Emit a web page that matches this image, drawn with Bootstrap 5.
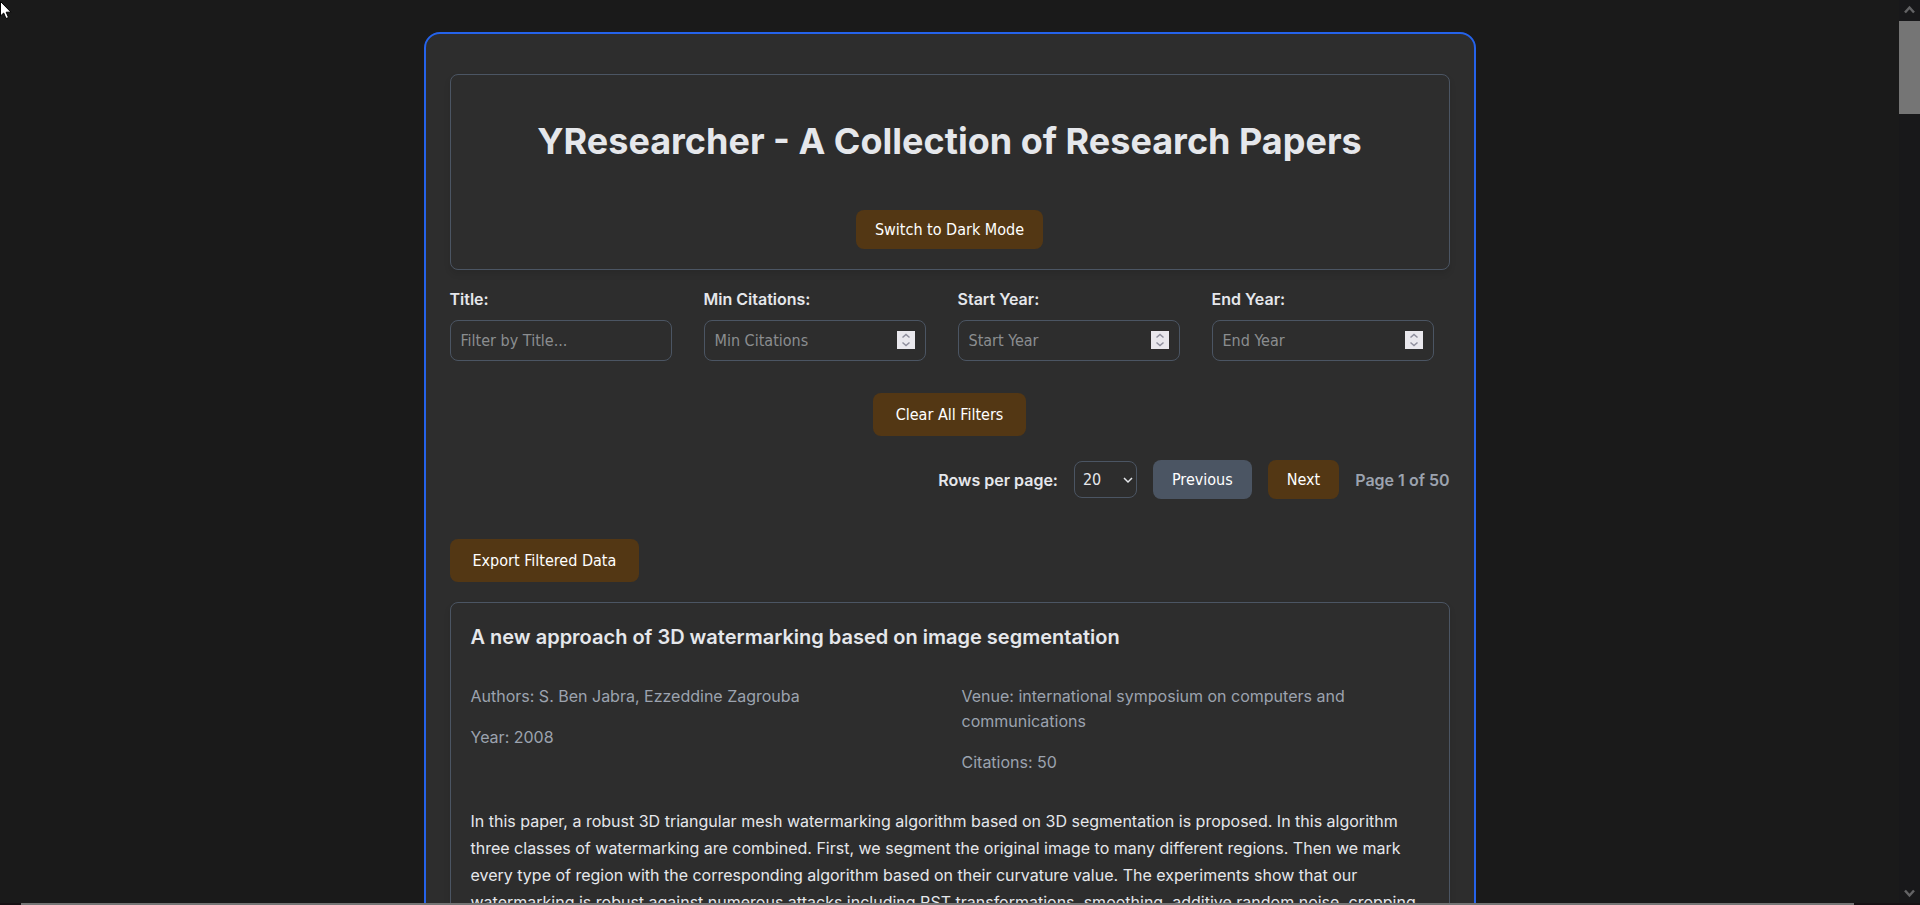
<!DOCTYPE html>
<html lang="en">
<head>
<meta charset="utf-8">
<meta name="viewport" content="width=device-width, initial-scale=1">
<title>YResearcher</title>
<link href="https://cdn.jsdelivr.net/npm/bootstrap@5.3.0/dist/css/bootstrap.min.css" rel="stylesheet">
<style>
  body { background: #1a1a1a; color: #e5e7eb; font-family: Inter, sans-serif; font-size: 16px; }
  .shell { max-width: 1052px; margin-top: 32px; padding: 40px 24px; background: #2d2d2d; border: 2px solid #2563eb; border-radius: 16px; }
  .panel { padding: 20px; border: 1px solid #4b5563; border-radius: 8px; box-shadow: 0 4px 6px rgba(0, 0, 0, .1); }
  .site-title { font-size: 36px; line-height: 44px; font-weight: 700; margin: 24px 0 47px; }
  .ui-btn, .field, .pager-select { font-family: "DejaVu Sans Condensed", "Noto Sans", sans-serif; font-size: 16px; line-height: 19px; border-radius: 8px; }
  .ui-btn { border: 0; padding: 10px 19px; color: #fff; background: #533714; }
  .ui-btn:hover, .ui-btn:active { color: #fff; background: #6b4a1d; }
  .ui-btn.wide { padding: 12px 23px; }
  .ui-btn:disabled { color: #fff; background: #4b5563; opacity: 1; }
  .filter { padding-right: 16px; }
  .filter label { line-height: 26px; font-weight: 600; }
  .field, .field:focus, .pager-select { color: #e5e7eb; background: transparent; border: 1px solid #4b5563; }
  .field { height: 41px; padding: 10px; }
  .field::placeholder { color: #8b8d90; }
  .field[type=number] { appearance: textfield; }
  .field::-webkit-inner-spin-button { appearance: none; }
  .spinner { right: 11px; top: 11px; }
  .pager-select { appearance: none; width: 63px; height: 37px; padding: 0 8px; }
  .chev { right: 4px; }
  .muted { color: #9ca3af; }
  .card-title-text { font-size: 20px; line-height: 28px; font-weight: 600; margin-bottom: 33px; }
  .paper { margin-top: 20px; }
  .meta { gap: 24px; line-height: 25px; margin-bottom: 33px; }
  .abstract { line-height: 27px; }
  .vbar { width: 21px; background: #18181a; }
  .vthumb { height: 93px; background: #757575; }
  .hbar { height: 2px; background: #171114; padding: 0 66px 0 21px; }
  .hthumb { background: #757575; }
</style>
</head>
<body class="vh-100 overflow-hidden d-flex flex-column">
<div class="d-flex flex-fill overflow-hidden">
  <main class="flex-fill overflow-hidden">
    <div class="shell mx-auto">
      <header class="panel text-center mb-3">
        <h1 class="site-title">YResearcher - A Collection of Research Papers</h1>
        <button type="button" class="btn ui-btn">Switch to Dark Mode</button>
      </header>

      <form>
        <div class="row row-cols-2 row-cols-md-4 gx-3 gy-3">
          <div class="col"><div class="filter">
            <label for="f-title" class="mb-2">Title:</label>
            <input id="f-title" type="text" class="form-control field" placeholder="Filter by Title...">
          </div></div>
          <div class="col"><div class="filter">
            <label for="f-cit" class="mb-2">Min Citations:</label>
            <div class="position-relative">
              <input id="f-cit" type="number" class="form-control field" placeholder="Min Citations">
              <svg class="spinner position-absolute" width="18" height="18" aria-hidden="true"><rect width="18" height="18" fill="#e9e8ed"/><path d="M5.500 6.500 9 3.500l3.500 3M5.500 11.500 9 14.500l3.500-3" fill="none" stroke="#8f8f9d" stroke-width="1.500"/></svg>
            </div>
          </div></div>
          <div class="col"><div class="filter">
            <label for="f-start" class="mb-2">Start Year:</label>
            <div class="position-relative">
              <input id="f-start" type="number" class="form-control field" placeholder="Start Year">
              <svg class="spinner position-absolute" width="18" height="18" aria-hidden="true"><rect width="18" height="18" fill="#e9e8ed"/><path d="M5.500 6.500 9 3.500l3.500 3M5.500 11.500 9 14.500l3.500-3" fill="none" stroke="#8f8f9d" stroke-width="1.500"/></svg>
            </div>
          </div></div>
          <div class="col"><div class="filter">
            <label for="f-end" class="mb-2">End Year:</label>
            <div class="position-relative">
              <input id="f-end" type="number" class="form-control field" placeholder="End Year">
              <svg class="spinner position-absolute" width="18" height="18" aria-hidden="true"><rect width="18" height="18" fill="#e9e8ed"/><path d="M5.500 6.500 9 3.500l3.500 3M5.500 11.500 9 14.500l3.500-3" fill="none" stroke="#8f8f9d" stroke-width="1.500"/></svg>
            </div>
          </div></div>
        </div>
        <div class="d-flex justify-content-center pt-2 mt-4 mb-4">
          <button type="reset" class="btn ui-btn wide">Clear All Filters</button>
        </div>
      </form>

      <div class="d-flex flex-wrap justify-content-end align-items-center gap-3 mb-3">
        <label for="rows" class="fw-semibold">Rows per page:</label>
        <div class="position-relative">
          <select id="rows" class="pager-select d-block"><option>20</option><option>50</option><option>100</option></select>
          <svg class="chev pe-none position-absolute top-50 translate-middle-y" width="10" height="8" aria-hidden="true"><path d="M1 2l4 4 4-4" fill="none" stroke="#e5e7eb" stroke-width="1.500"/></svg>
        </div>
        <button type="button" class="btn ui-btn" disabled>Previous</button>
        <button type="button" class="btn ui-btn">Next</button>
        <span class="muted fw-semibold">Page 1 of 50</span>
      </div>

      <div class="pt-4">
        <button type="button" class="btn ui-btn wide">Export Filtered Data</button>
      </div>

      <article class="panel paper">
        <h2 class="card-title-text">A new approach of 3D watermarking based on image segmentation</h2>
        <div class="meta muted d-flex">
          <div class="w-50">
            <p class="mb-3">Authors: S. Ben Jabra, Ezzeddine Zagrouba</p>
            <p class="mb-0">Year: 2008</p>
          </div>
          <div class="w-50">
            <p class="mb-3">Venue: international symposium on computers and communications</p>
            <p class="mb-0">Citations: 50</p>
          </div>
        </div>
        <p class="abstract mb-0">In this paper, a robust 3D triangular mesh watermarking algorithm based on 3D segmentation is proposed. In this algorithm three classes of watermarking are combined. First, we segment the original image to many different regions. Then we mark every type of region with the corresponding algorithm based on their curvature value. The experiments show that our watermarking is robust against numerous attacks including RST transformations, smoothing, additive random noise, cropping</p>
      </article>
    </div>
  </main>
  <div class="vbar flex-shrink-0 d-flex flex-column" aria-hidden="true">
    <svg width="21" height="21"><path d="M6 12.500 10.500 7.500l4.500 5" fill="none" stroke="#636365" stroke-width="2.500"/></svg>
    <div class="vthumb"></div>
    <svg class="mt-auto" width="21" height="21"><path d="M6 8.500l4.500 5 4.500-5" fill="none" stroke="#636365" stroke-width="2.500"/></svg>
  </div>
</div>
<div class="hbar d-flex flex-shrink-0" aria-hidden="true"><div class="hthumb flex-fill"></div></div>
<svg class="position-absolute top-0 start-0 pe-none" width="13" height="20" aria-hidden="true"><path d="M.5 1.500v14.500l3.200-3 2.300 5.500 2.500-1-2.300-5.300h4.800z" fill="#fff" stroke="#000"/></svg>
<script src="https://cdn.jsdelivr.net/npm/bootstrap@5.3.0/dist/js/bootstrap.bundle.min.js"></script>
</body>
</html>
